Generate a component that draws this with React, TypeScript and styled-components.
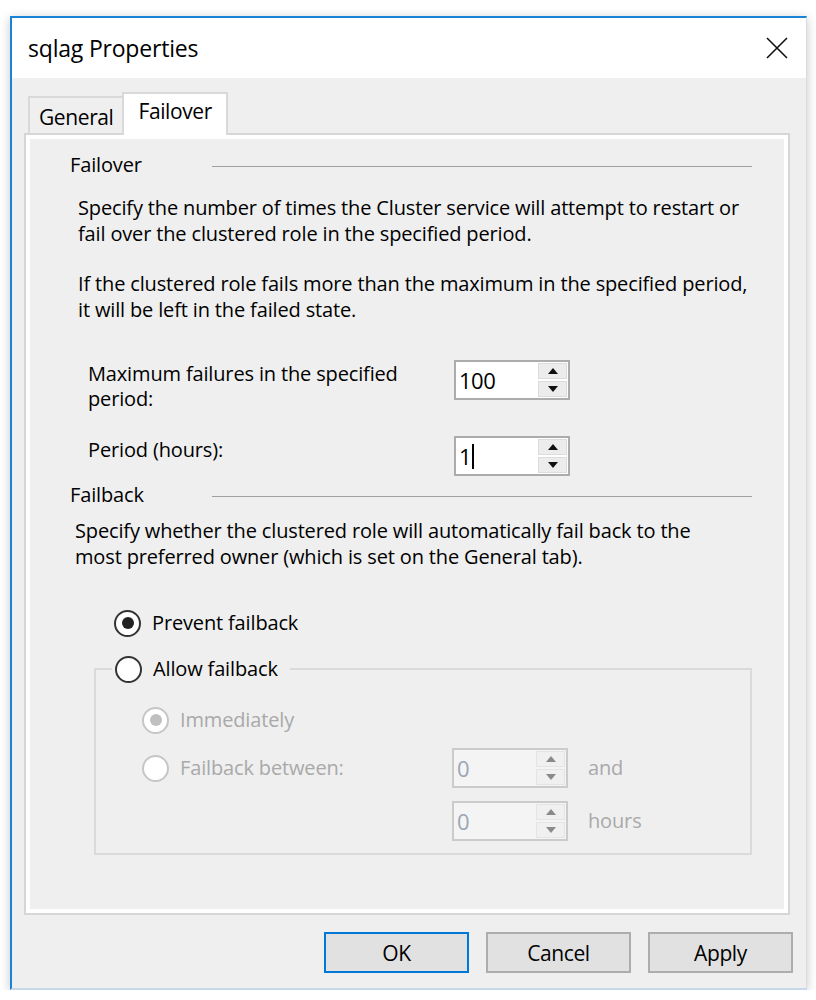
import React from 'react'
import styled, { createGlobalStyle } from 'styled-components'

const GlobalStyle = createGlobalStyle`
  html, body {
    margin: 0;
    padding: 0;
    background: #ffffff;
  }
  body {
    font-family: 'Open Sans', 'Noto Sans', sans-serif;
    color: #000;
  }
`

const Page = styled.div`
  padding: 16px 0 0 10px;
`

const Window = styled.div`
  width: 797px;
  height: 974px;
  box-sizing: border-box;
  display: flex;
  flex-direction: column;
  background: #efefef;
  border-top: 2px solid #1883d7;
  border-left: 2px solid #1883d7;
  border-right: 1px solid #d6dde4;
  border-bottom: 2px solid #c6d8ea;
  box-shadow: 0 2px 10px rgba(0, 0, 0, 0.22);
`

const TitleBar = styled.div`
  height: 60px;
  flex-shrink: 0;
  background: #ffffff;
  display: flex;
  align-items: center;
  justify-content: space-between;
  padding: 0 17px 0 16px;
`

const Title = styled.span`
  font-size: 23px;
  letter-spacing: -0.2px;
`

const CloseButton = styled.div`
  width: 24px;
  height: 24px;
  display: flex;
  align-items: center;
  justify-content: center;
`

const Body = styled.div`
  flex: 1;
  display: flex;
  flex-direction: column;
  padding: 14px 13px 0 12px;
`

const TabStrip = styled.div`
  display: flex;
  align-items: flex-end;
  height: 41px;
  padding-left: 4px;
`

const Tab = styled.div<{ $active?: boolean }>`
  box-sizing: border-box;
  height: ${p => (p.$active ? '43px' : '37px')};
  margin-bottom: ${p => (p.$active ? '-2px' : '0')};
  position: relative;
  z-index: ${p => (p.$active ? 1 : 0)};
  padding: ${p => (p.$active ? '0 14px 0 14px' : '0 9px 0 9px')};
  background: ${p => (p.$active ? '#ffffff' : '#efefef')};
  border: 2px solid #d9d9d9;
  border-bottom: none;
  border-right: ${p => (p.$active ? '2px solid #d9d9d9' : 'none')};
  font-size: 21px;
  line-height: ${p => (p.$active ? '34px' : '38px')};
  letter-spacing: -0.4px;
`

const Panel = styled.div`
  height: 782px;
  box-sizing: border-box;
  margin-right: 3px;
  border: 2px solid #d6d6d6;
  box-shadow: inset 0 0 0 4px #ffffff;
  padding: 17px 36px 0 44px;
  font-size: 20px;
  line-height: 26px;
  letter-spacing: -0.15px;
`

const SectionHeader = styled.div<{ $gap?: number }>`
  display: grid;
  grid-template-columns: 142px 1fr;
  align-items: center;
  height: 26px;
  margin-top: ${p => p.$gap ?? 0}px;
`

const SectionRule = styled.div`
  height: 1px;
  background: #a0a0a0;
  margin-top: 3px;
`

const Para = styled.p<{ $gap: number; $indent: number }>`
  margin: ${p => p.$gap}px 0 0 ${p => p.$indent}px;
`

const FieldRow = styled.div<{ $gap: number }>`
  display: grid;
  grid-template-columns: 366px 116px;
  align-items: start;
  margin: ${p => p.$gap}px 0 0 18px;
`

const FieldLabel = styled.div`
  padding-top: 1px;
  line-height: 25px;
`

const SpinFrame = styled.div<{ $disabled?: boolean }>`
  width: 116px;
  height: 40px;
  box-sizing: border-box;
  border: 2px solid ${p => (p.$disabled ? '#cbcbcb' : '#acacac')};
  background: ${p => (p.$disabled ? '#f4f4f4' : '#ffffff')};
  display: flex;
`

const SpinValue = styled.div<{ $disabled?: boolean }>`
  flex: 1;
  display: flex;
  align-items: center;
  padding-left: 3px;
  font-size: 22px;
  letter-spacing: -0.5px;
  color: ${p => (p.$disabled ? '#9aa6b6' : '#000')};
`

const Caret = styled.span`
  display: inline-block;
  width: 2px;
  height: 25px;
  background: #000;
  margin-left: 1px;
`

const SpinButtons = styled.div`
  width: 29px;
  margin: 1px 1px 1px 0;
  display: flex;
  flex-direction: column;
  gap: 2px;
`

const SpinButton = styled.div<{ $disabled?: boolean }>`
  flex: 1;
  display: flex;
  align-items: center;
  justify-content: center;
  background: ${p => (p.$disabled ? '#f0f0f0' : '#ececec')};
  border: 1px solid ${p => (p.$disabled ? '#e4e4e4' : '#dcdcdc')};
`

const RadioRow = styled.div<{ $disabled?: boolean }>`
  display: flex;
  align-items: center;
  gap: 11px;
  height: 28px;
  color: ${p => (p.$disabled ? '#a9a9a9' : '#000')};
`

const RadioCircle = styled.span<{ $disabled?: boolean; $checked?: boolean }>`
  box-sizing: border-box;
  width: 27px;
  height: 27px;
  border-radius: 50%;
  border: 2px solid ${p => (p.$disabled ? '#c6c6c6' : '#333333')};
  background: #ffffff;
  display: flex;
  align-items: center;
  justify-content: center;

  &::after {
    content: '';
    display: ${p => (p.$checked ? 'block' : 'none')};
    width: 12px;
    height: 12px;
    border-radius: 50%;
    background: ${p => (p.$disabled ? '#c0c0c0' : '#222222')};
  }
`

const RadioBlock = styled.div`
  margin: 39px 0 0 44px;
`

const GroupBox = styled.fieldset`
  margin: 18px 0 0 24px;
  padding: 23px 0 12px 16px;
  border: 2px solid #dadada;
  min-width: 0;
`

const GroupLegend = styled.legend`
  padding: 0 12px 0 3px;
`

const GroupContent = styled.div`
  padding-left: 30px;
`

const BetweenGrid = styled.div`
  display: grid;
  grid-template-columns: 290px 116px auto;
  column-gap: 20px;
  row-gap: 13px;
  align-items: center;
  margin-top: 14px;
`

const DimText = styled.span`
  color: #a9a9a9;
`

const ButtonRow = styled.div`
  display: flex;
  justify-content: flex-end;
  gap: 17px;
  margin-top: 17px;
`

const Button = styled.button<{ $default?: boolean }>`
  width: 145px;
  height: 41px;
  box-sizing: border-box;
  border: 2px solid ${p => (p.$default ? '#0078d7' : '#adadad')};
  background: #e1e1e1;
  font-family: 'Open Sans', 'Noto Sans', sans-serif;
  font-size: 21px;
  letter-spacing: -0.4px;
  color: #000;
  padding: 0;
`

const Arrow = ({ up, color }: { up?: boolean; color: string }) => (
  <svg width="10" height="6" viewBox="0 0 10 6">
    <path d={up ? 'M0 6 L5 0 L10 6 Z' : 'M0 0 L10 0 L5 6 Z'} fill={color} />
  </svg>
)

const Spin = ({ value, disabled, caret }: { value: string; disabled?: boolean; caret?: boolean }) => (
  <SpinFrame $disabled={disabled}>
    <SpinValue $disabled={disabled}>
      {value}
      {caret && <Caret />}
    </SpinValue>
    <SpinButtons>
      <SpinButton $disabled={disabled}>
        <Arrow up color={disabled ? '#8a8a8a' : '#111'} />
      </SpinButton>
      <SpinButton $disabled={disabled}>
        <Arrow color={disabled ? '#8a8a8a' : '#111'} />
      </SpinButton>
    </SpinButtons>
  </SpinFrame>
)

const Radio = ({ label, checked, disabled }: { label: string; checked?: boolean; disabled?: boolean }) => (
  <RadioRow $disabled={disabled}>
    <RadioCircle $checked={checked} $disabled={disabled} />
    {label}
  </RadioRow>
)

export default function App() {
  return (
    <Page>
      <GlobalStyle />
      <Window>
        <TitleBar>
          <Title>sqlag Properties</Title>
          <CloseButton>
            <svg width="22" height="22" viewBox="0 0 22 22">
              <path d="M1 1 L21 21 M21 1 L1 21" stroke="#111" strokeWidth="1.6" />
            </svg>
          </CloseButton>
        </TitleBar>
        <Body>
          <TabStrip>
            <Tab>General</Tab>
            <Tab $active>Failover</Tab>
          </TabStrip>
          <Panel>
            <SectionHeader>
              <span>Failover</span>
              <SectionRule />
            </SectionHeader>
            <Para $gap={17} $indent={8}>
              Specify the number of times the Cluster service will attempt to restart or
              <br />
              fail over the clustered role in the specified period.
            </Para>
            <Para $gap={24} $indent={8}>
              If the clustered role fails more than the maximum in the specified period,
              <br />
              it will be left in the failed state.
            </Para>
            <FieldRow $gap={37}>
              <FieldLabel>
                Maximum failures in the specified
                <br />
                period:
              </FieldLabel>
              <Spin value="100" />
            </FieldRow>
            <FieldRow $gap={25}>
              <FieldLabel>Period (hours):</FieldLabel>
              <Spin value="1" caret />
            </FieldRow>
            <SectionHeader $gap={6}>
              <span>Failback</span>
              <SectionRule />
            </SectionHeader>
            <Para $gap={10} $indent={5}>
              Specify whether the clustered role will automatically fail back to the
              <br />
              most preferred owner (which is set on the General tab).
            </Para>
            <RadioBlock>
              <Radio label="Prevent failback" checked />
            </RadioBlock>
            <GroupBox>
              <GroupLegend>
                <Radio label="Allow failback" />
              </GroupLegend>
              <GroupContent>
                <Radio label="Immediately" checked disabled />
                <BetweenGrid>
                  <Radio label="Failback between:" disabled />
                  <Spin value="0" disabled />
                  <DimText>and</DimText>
                  <span />
                  <Spin value="0" disabled />
                  <DimText>hours</DimText>
                </BetweenGrid>
              </GroupContent>
            </GroupBox>
          </Panel>
          <ButtonRow>
            <Button $default>OK</Button>
            <Button>Cancel</Button>
            <Button>Apply</Button>
          </ButtonRow>
        </Body>
      </Window>
    </Page>
  )
}
